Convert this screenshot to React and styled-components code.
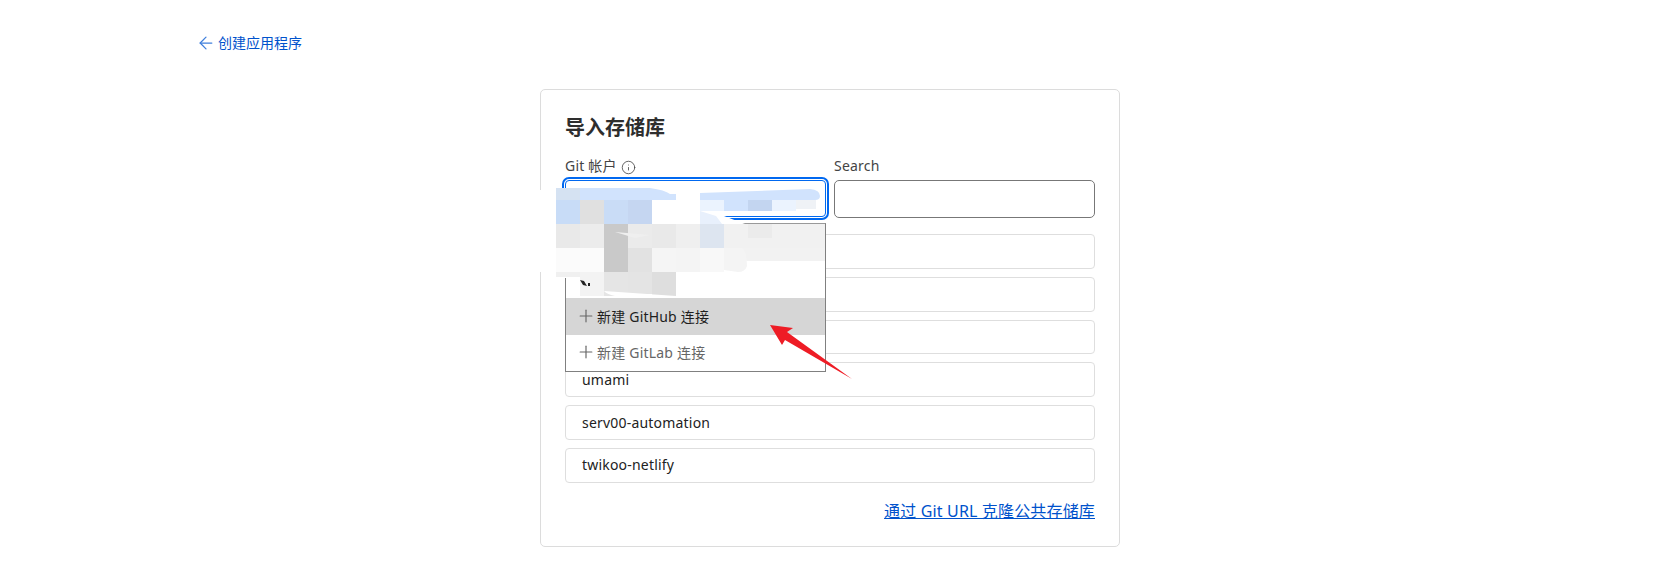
import React from "react";
import styled, { createGlobalStyle } from "styled-components";
import { ArrowLeft, Plus, Info } from "lucide-react";

const Global = createGlobalStyle`
  html, body { margin: 0; padding: 0; background: #fff; }
  body { font-family: "Noto Sans", "Noto Sans CJK SC", sans-serif; font-size: 14px; color: #222; overflow: hidden; }
`;

const Page = styled.div`
  position: relative;
  width: 1660px;
  height: 580px;
`;

const BackBar = styled.div`
  display: flex;
  padding: 33px 0 0 196px;
`;

const BackLink = styled.a`
  display: flex;
  align-items: center;
  gap: 2px;
  height: 20px;
  font-size: 14px;
  line-height: 18px;
  padding-bottom: 1px;
  box-sizing: border-box;
  color: #0052cc;
  text-decoration: none;
  svg { color: #3f7fdc; position: relative; }
`;

const Card = styled.section`
  box-sizing: border-box;
  width: 580px;
  height: 458px;
  margin: 36px auto 0;
  padding: 24px 24px 23px;
  border: 1px solid #dcdcdc;
  border-radius: 5px;
  background: #fff;
`;

const Title = styled.h2`
  margin: 0 0 15px;
  font-size: 20px;
  line-height: 28px;
  font-weight: 700;
  color: #2e2e2e;
`;

const Fields = styled.div`
  display: grid;
  grid-template-columns: 261px 261px;
  gap: 8px;
  margin-bottom: 16px;
`;

const Field = styled.div`
  position: relative;
  display: flex;
  flex-direction: column;
  gap: 3px;
`;

const Label = styled.label`
  display: flex;
  align-items: center;
  gap: 4px;
  height: 20px;
  padding-bottom: 2px;
  box-sizing: border-box;
  font-size: 14px;
  line-height: 18px;
  letter-spacing: 0.2px;
  color: #444;
  svg { position: relative; top: 1px; }
`;

const SelectBox = styled.div`
  box-sizing: border-box;
  height: 37px;
  border: 1px solid #0068f0;
  border-radius: 4px;
  outline: 2px solid #0068f0;
  outline-offset: 1px;
  background: #fff;
`;

const SearchInput = styled.input`
  box-sizing: border-box;
  height: 38px;
  width: 261px;
  border: 1px solid #777;
  border-radius: 5px;
  background: #fff;
`;

const Menu = styled.ul`
  position: absolute;
  z-index: 2;
  top: 66px;
  left: 0;
  box-sizing: border-box;
  width: 261px;
  height: 149px;
  margin: 0;
  padding: 74px 0 0;
  list-style: none;
  background: #fff;
  border: 1px solid #808080;
  border-top-color: #999;
`;

const MenuItem = styled.li`
  box-sizing: border-box;
  display: flex;
  align-items: center;
  gap: 1px;
  height: 36.5px;
  padding: 0 0 1px 10px;
  font-size: 14px;
  letter-spacing: 0.2px;
  color: ${(p) => (p.$active ? "#1e1e1e" : "#666")};
  background: ${(p) => (p.$active ? "#d6d6d6" : "#fff")};
  svg { color: #666; flex: none; }
`;

const RepoList = styled.ul`
  display: flex;
  flex-direction: column;
  gap: 8px;
  margin: 0;
  padding: 0;
  list-style: none;
`;

const Repo = styled.li`
  box-sizing: border-box;
  display: flex;
  align-items: center;
  height: 34.8px;
  padding: 0 0 1px 16px;
  border: 1px solid #dedede;
  border-radius: 4px;
  font-size: 14px;
  letter-spacing: 0.2px;
  color: #222;
`;

const Footer = styled.div`
  display: flex;
  justify-content: flex-end;
  margin-top: 16px;
`;

const CloneLink = styled.a`
  font-size: 16px;
  line-height: 24px;
  letter-spacing: 0.16px;
  color: #0052cc;
  text-decoration: underline;
`;

const Overlay = styled.svg`
  position: absolute;
  z-index: 3;
  left: 0;
  top: 0;
  pointer-events: none;
`;

const cells = [
  [556, 188, 24, 12, "#d5e2f2"],
  [556, 200, 24, 24, "#c8dcf7"], [580, 200, 24, 24, "#e0e0e0"], [604, 200, 24, 24, "#c9dcf6"], [628, 200, 24, 24, "#c5d6f1"],
  [556, 224, 24, 24, "#e9e9e9"], [580, 224, 24, 24, "#ececec"], [604, 224, 24, 24, "#c9c9c9"], [628, 224, 24, 24, "#ebebeb"],
  [652, 224, 24, 24, "#e9e9e9"], [676, 224, 24, 24, "#efefef"], [700, 224, 24, 24, "#dde5f0"], [724, 224, 101, 24, "#f1f1f1"],
  [748, 224, 24, 14, "#ebebeb"],
  [556, 248, 24, 24, "#fbfbfb"], [580, 248, 24, 24, "#fbfbfb"], [604, 248, 24, 24, "#c9c9c9"], [628, 248, 24, 24, "#e2e2e2"],
  [652, 248, 24, 24, "#f5f5f5"], [676, 248, 24, 24, "#f4f4f4"], [700, 248, 24, 24, "#f8f8f8"], [724, 248, 101, 13, "#f2f2f2"],
  [580, 272, 24, 24, "#f3f3f3"], [604, 272, 24, 24, "#e5e5e5"], [628, 272, 24, 22, "#e4e4e4"], [652, 272, 24, 24, "#dedede"],
  [700, 200, 24, 11, "#ebf3fe"], [724, 200, 24, 11, "#d1e3fd"], [748, 200, 24, 11, "#c3d5f0"], [772, 200, 24, 11, "#ebf3fe"], [796, 200, 20, 9, "#eff2f6"],
];

const Smear = () => (
  <Overlay width="1660" height="580" viewBox="0 0 1660 580" aria-hidden="true">
    <path d="M533 190 H566 V200 H712 V216 H724 L745 224 H700 V296 H566 V278 H556 V272 H533 Z" fill="#fff" />
    <path d="M700 211 L716 216 L722 224 H700 Z" fill="#e8f0fc" />
    <path d="M580 188 H650 Q665 190 670 194 H676 V200 H580 Z" fill="#d1e3fd" />
    <path d="M700 193 L810 189 Q820 190 820 196 Q820 200 815 200 H700 Z" fill="#d1e3fd" />
    {cells.map(([x, y, w, h, c]) => (
      <rect key={`${x}-${y}`} x={x} y={y} width={w} height={h} fill={c} />
    ))}
    <path d="M724 248 H742 Q747 252 747 266 Q745 272 738 272 L724 270 Z" fill="#f4f4f4" />
    <path d="M556 272 H580 V277 H556 Z" fill="#f0f0f0" />
    <path d="M615 232 L650 235 L635 238 Z" fill="#efefef" />
    <path d="M580 280 L584 281 L587 286 L583 285 Z M588 283 H590 V286 H588 Z" fill="#222" />
    <path d="M604 291 L676 296 L690 298 H640 Q610 298 604 291 Z" fill="#fff" />
  </Overlay>
);

const RedArrow = () => (
  <Overlay width="1660" height="580" viewBox="0 0 1660 580" aria-hidden="true">
    <polygon points="770,325 793,328 787,332 852,379 785,340 782,345" fill="#ee1c25" />
  </Overlay>
);

export default function App() {
  return (
    <Page>
      <Global />
      <BackBar>
        <BackLink>
          <ArrowLeft size={20} strokeWidth={1.5} />
          创建应用程序
        </BackLink>
      </BackBar>
      <Card>
        <Title>导入存储库</Title>
        <Fields>
          <Field>
            <Label>
              Git 帐户
              <Info size={15} strokeWidth={1.3} color="#444" />
            </Label>
            <SelectBox />
            <Menu>
              <MenuItem $active>
                <Plus size={20} strokeWidth={1.4} />
                新建 GitHub 连接
              </MenuItem>
              <MenuItem>
                <Plus size={20} strokeWidth={1.4} />
                新建 GitLab 连接
              </MenuItem>
            </Menu>
          </Field>
          <Field>
            <Label>Search</Label>
            <SearchInput />
          </Field>
        </Fields>
        <RepoList>
          <Repo />
          <Repo />
          <Repo />
          <Repo>umami</Repo>
          <Repo>serv00-automation</Repo>
          <Repo>twikoo-netlify</Repo>
        </RepoList>
        <Footer>
          <CloneLink>通过 Git URL 克隆公共存储库</CloneLink>
        </Footer>
      </Card>
      <Smear />
      <RedArrow />
    </Page>
  );
}
